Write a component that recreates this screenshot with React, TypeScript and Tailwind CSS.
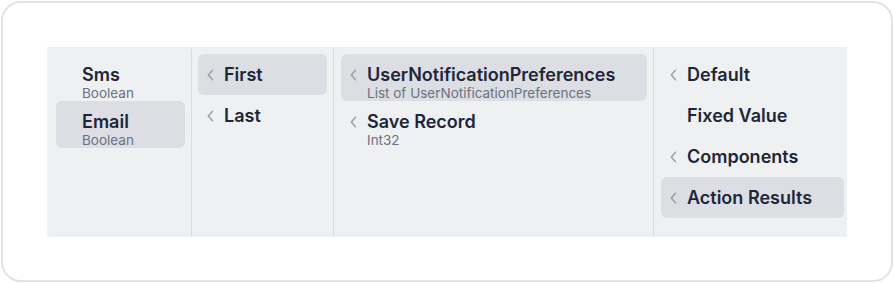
import { ReactNode } from "react";

type Item = { title: string; sub?: string; chevron?: boolean; active?: boolean };

const columns: { width: string; pad: string; items: Item[] }[] = [
  {
    width: "w-[145px]",
    pad: "pl-[9px] pr-[6px]",
    items: [
      { title: "Sms", sub: "Boolean" },
      { title: "Email", sub: "Boolean", active: true },
    ],
  },
  {
    width: "w-[142px]",
    pad: "pl-[6px] pr-[6px]",
    items: [
      { title: "First", chevron: true, active: true },
      { title: "Last", chevron: true },
    ],
  },
  {
    width: "w-[320px]",
    pad: "pl-[7px] pr-[6px]",
    items: [
      {
        title: "UserNotificationPreferences",
        sub: "List of UserNotificationPreferences",
        chevron: true,
        active: true,
      },
      { title: "Save Record", sub: "Int32", chevron: true },
    ],
  },
  {
    width: "flex-1",
    pad: "pl-[7px] pr-[3px]",
    items: [
      { title: "Default", chevron: true },
      { title: "Fixed Value" },
      { title: "Components", chevron: true },
      { title: "Action Results", chevron: true, active: true },
    ],
  },
];

function Chevron() {
  return (
    <svg width="7" height="12" viewBox="0 0 7 12" fill="none" className="text-[#9aa0aa]">
      <path d="M5.5 1.2 L1.3 6 L5.5 10.8" stroke="currentColor" strokeWidth="1.5" strokeLinecap="round" strokeLinejoin="round" />
    </svg>
  );
}

function Row({ item }: { item: Item }): ReactNode {
  return (
    <div
      className={`flex min-h-[41px] rounded-md pl-[9px] pr-2 pt-[11px] ${
        item.active ? "bg-[#dcdee3]" : ""
      }`}
    >
      <div className="flex h-5 w-[17px] shrink-0 items-center">{item.chevron && <Chevron />}</div>
      <div className="flex min-w-0 flex-col">
        <span className="text-[18px] leading-5 font-semibold text-[#1e2638] whitespace-nowrap">
          {item.title}
        </span>
        {item.sub && (
          <span className="text-[13.5px] leading-4 text-[#6b7180] whitespace-nowrap">{item.sub}</span>
        )}
      </div>
    </div>
  );
}

export default function App() {
  return (
    <div className="h-[283px] w-[894px] bg-white p-px" style={{ fontFamily: "Inter, 'Noto Sans', sans-serif" }}>
      <div className="h-[281px] w-[892px] rounded-[20px] border-2 border-[#e1e3e8] p-[44px]">
        <div className="flex h-[190px] w-[800px] bg-[#eff0f2] pt-[2px]">
          {columns.map((col, i) => (
            <div
              key={i}
              className={`${col.width} ${col.pad} flex flex-col pt-[5px] ${
                i < columns.length - 1 ? "border-r border-[#dadce0]" : ""
              }`}
            >
              {col.items.map((item) => (
                <Row key={item.title} item={item} />
              ))}
            </div>
          ))}
        </div>
      </div>
    </div>
  );
}
